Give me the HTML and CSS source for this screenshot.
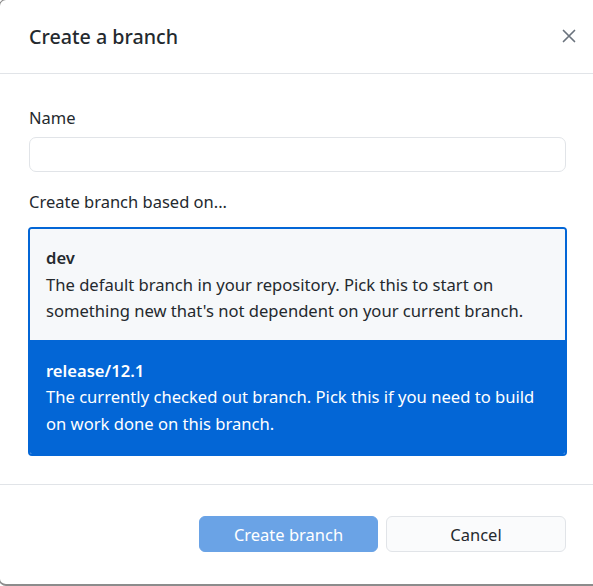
FILE: index.html
```html
<!DOCTYPE html>
<html lang="en">
<head>
<meta charset="utf-8">
<title>Create a branch</title>
<link rel="stylesheet" href="styles.css">
</head>
<body>
<div class="dialog">
  <header class="dialog-header">
    <h1 class="dialog-title">Create a branch</h1>
    <button class="close" aria-label="Close">
      <svg width="14" height="14" viewBox="0 0 14 14"><path d="M1.5 1.5 L12.5 12.5 M12.5 1.5 L1.5 12.5" stroke="#6a737d" stroke-width="1.7" fill="none" stroke-linecap="round"/></svg>
    </button>
  </header>
  <div class="dialog-body">
    <label class="field-label">Name</label>
    <input class="text-input" type="text">
    <div class="field-label based">Create branch based on...</div>
    <div class="branch-list">
      <div class="branch-item">
        <div class="branch-name">dev</div>
        <div class="branch-desc">The default branch in your repository. Pick this to start on something new that's not dependent on your current branch.</div>
      </div>
      <div class="branch-item selected">
        <div class="branch-name">release/12.1</div>
        <div class="branch-desc">The currently checked out branch. Pick this if you need to build on work done on this branch.</div>
      </div>
    </div>
  </div>
  <footer class="dialog-footer">
    <button class="btn btn-primary">Create branch</button>
    <button class="btn btn-default">Cancel</button>
  </footer>
</div>
</body>
</html>
```
FILE: styles.css
```css
html, body {
  margin: 0;
  padding: 0;
  background: #ffffff;
  overflow: hidden;
}
body {
  font-family: "Noto Sans", "Open Sans", sans-serif;
  color: #24292e;
}
.dialog {
  margin: -1px 0 0 -1px;
  width: 600px;
  height: 587px;
  box-sizing: border-box;
  border: 1px solid #8c8c8c;
  border-bottom-width: 2px;
  border-radius: 7px;
  background: #fff;
  display: flex;
  flex-direction: column;
}
.dialog-header {
  height: 74px;
  flex: none;
  box-sizing: border-box;
  border-bottom: 1px solid #e1e4e8;
  display: flex;
  align-items: center;
  padding: 0 19px 1px 29px;
}
.dialog-title {
  flex: 1;
  margin: 0;
  font-size: 19.7px;
  font-weight: 500;
  color: #24292e;
}
.close {
  border: 0;
  background: none;
  padding: 0;
  width: 20px;
  height: 20px;
  display: flex;
  align-items: center;
  justify-content: center;
}
.dialog-body {
  padding: 32px 34px 0 29px;
  flex: 1;
  display: flex;
  flex-direction: column;
}
.field-label {
  font-size: 16.5px;
  line-height: 24px;
  color: #24292e;
}
.text-input {
  margin-top: 7px;
  height: 35px;
  box-sizing: border-box;
  border: 1px solid #e1e4e8;
  border-radius: 7px;
  width: 537px;
  font: inherit;
}
.based {
  margin-top: 18px;
}
.branch-list {
  margin-top: 13px;
  margin-left: -1px;
  width: 539px;
  box-sizing: border-box;
  border: 2px solid #0366d6;
  border-radius: 4px;
  overflow: hidden;
}
.branch-item {
  background: #f6f8fa;
  padding: 16px 14px 15px 16px;
  font-size: 16.6px;
  line-height: 26.5px;
  color: #24292e;
}
.branch-item.selected {
  background: #0366d6;
  color: #ffffff;
  padding-top: 18px;
  padding-bottom: 17px;
}
.branch-name {
  font-weight: 600;
}
.dialog-footer {
  height: 100px;
  flex: none;
  box-sizing: border-box;
  border-top: 1px solid #e1e4e8;
  display: flex;
  justify-content: flex-end;
  align-items: flex-start;
  padding: 31px 32px 0 0;
  gap: 8px;
}
.btn {
  height: 36px;
  box-sizing: border-box;
  border-radius: 6px;
  font-family: inherit;
  font-size: 16.5px;
}
.btn-primary {
  width: 179px;
  background: #6aa3e6;
  border: 1px solid #6aa3e6;
  color: #ffffff;
}
.btn-default {
  width: 180px;
  background: #fafbfc;
  border: 1px solid #e1e4e8;
  color: #24292e;
}
```
